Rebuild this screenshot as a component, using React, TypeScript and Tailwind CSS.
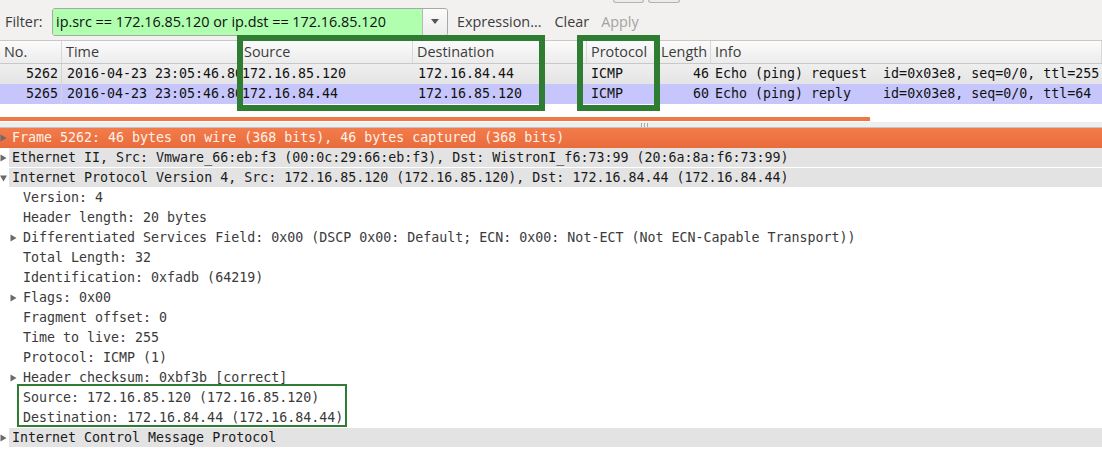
import React from 'react';

const MONO = { fontFamily: '"DejaVu Sans Mono", "Liberation Mono", monospace' };

type Packet = {
  no: string;
  time: string;
  src: string;
  dst: string;
  proto: string;
  len: string;
  info: string;
  bg: string;
};

const packets: Packet[] = [
  {
    no: '5262',
    time: '2016-04-23 23:05:46.800000',
    src: '172.16.85.120',
    dst: '172.16.84.44',
    proto: 'ICMP',
    len: '46',
    info: 'Echo (ping) request  id=0x03e8, seq=0/0, ttl=255',
    bg: 'bg-linear-to-b from-[#efefef] to-[#e4e4e4]',
  },
  {
    no: '5265',
    time: '2016-04-23 23:05:46.800000',
    src: '172.16.84.44',
    dst: '172.16.85.120',
    proto: 'ICMP',
    len: '60',
    info: 'Echo (ping) reply    id=0x03e8, seq=0/0, ttl=64',
    bg: 'bg-[#c6c6fc]',
  },
];

type Node = {
  text: string;
  level: 0 | 1;
  arrow?: 'right' | 'down';
  kind?: 'selected' | 'gray';
};

const details: Node[] = [
  { text: 'Frame 5262: 46 bytes on wire (368 bits), 46 bytes captured (368 bits)', level: 0, arrow: 'right', kind: 'selected' },
  { text: 'Ethernet II, Src: Vmware_66:eb:f3 (00:0c:29:66:eb:f3), Dst: WistronI_f6:73:99 (20:6a:8a:f6:73:99)', level: 0, arrow: 'right', kind: 'gray' },
  { text: 'Internet Protocol Version 4, Src: 172.16.85.120 (172.16.85.120), Dst: 172.16.84.44 (172.16.84.44)', level: 0, arrow: 'down', kind: 'gray' },
  { text: 'Version: 4', level: 1 },
  { text: 'Header length: 20 bytes', level: 1 },
  { text: 'Differentiated Services Field: 0x00 (DSCP 0x00: Default; ECN: 0x00: Not-ECT (Not ECN-Capable Transport))', level: 1, arrow: 'right' },
  { text: 'Total Length: 32', level: 1 },
  { text: 'Identification: 0xfadb (64219)', level: 1 },
  { text: 'Flags: 0x00', level: 1, arrow: 'right' },
  { text: 'Fragment offset: 0', level: 1 },
  { text: 'Time to live: 255', level: 1 },
  { text: 'Protocol: ICMP (1)', level: 1 },
  { text: 'Header checksum: 0xbf3b [correct]', level: 1, arrow: 'right' },
  { text: 'Source: 172.16.85.120 (172.16.85.120)', level: 1 },
  { text: 'Destination: 172.16.84.44 (172.16.84.44)', level: 1 },
  { text: 'Internet Control Message Protocol', level: 0, arrow: 'right', kind: 'gray' },
];

const Arrow = ({ dir }: { dir: 'right' | 'down' }) => (
  <svg width="7" height="8" viewBox="0 0 7 8" className="shrink-0">
    {dir === 'right' ? (
      <path d="M0.5 0.5 L6.5 4 L0.5 7.5 Z" fill="#6a6a6a" />
    ) : (
      <path d="M0 1.5 L7 1.5 L3.5 7.5 Z" fill="#6a6a6a" />
    )}
  </svg>
);

const headerCols = [
  { label: 'No.', w: 'w-[62px]' },
  { label: 'Time', w: 'w-[178px]' },
  { label: 'Source', w: 'w-[173px]' },
  { label: 'Destination', w: 'w-[174px]' },
  { label: 'Protocol', w: 'w-[70px]' },
  { label: 'Length', w: 'w-[54px]' },
  { label: 'Info', w: 'flex-1' },
];

export default function App() {
  return (
    <div
      className="relative w-[1102px] h-[457px] overflow-hidden bg-white text-[#1c1c1c]"
      style={{ fontFamily: '"Open Sans", "Noto Sans", sans-serif' }}
    >
      {/* toolbar */}
      <div className="bg-[#f2f1f0]">
        <div className="flex h-[3px] pl-[613px] gap-[4px]">
          <div className="w-[31px] h-[3px] border border-t-0 border-[#b5b3b0] rounded-b-[3px] bg-[#ecebe9]" />
          <div className="w-[32px] h-[3px] border border-t-0 border-[#b5b3b0] rounded-b-[3px] bg-[#ecebe9]" />
        </div>
        <div className="flex items-center h-[37px] pl-[5px] text-[14.4px]">
          <span className="text-[#3c3c3c] w-[47px]">Filter:</span>
          <div className="flex h-[28px] w-[396px] rounded-[3px] border border-[#a8a8a8] overflow-hidden">
            <div className="flex-1 bg-[#afffaf] flex items-center pl-[3px] text-[#101010] whitespace-nowrap">
              ip.src == 172.16.85.120 or ip.dst == 172.16.85.120
            </div>
            <div className="w-[25px] border-l border-[#b8b8b8] bg-linear-to-b from-[#fbfbfb] to-[#ececec] flex items-center justify-center">
              <svg width="8" height="5" viewBox="0 0 8 5">
                <path d="M0 0 L8 0 L4 5 Z" fill="#555" />
              </svg>
            </div>
          </div>
          <span className="ml-[9px] text-[#3c3c3c]">Expression...</span>
          <span className="ml-[13px] text-[#3c3c3c]">Clear</span>
          <span className="ml-[12px] text-[#a3a3a3]">Apply</span>
        </div>
      </div>

      {/* packet list */}
      <div className="flex h-[24px] border-t border-b border-[#c8c8c8] bg-linear-to-b from-[#fbfbfb] to-[#ececec] text-[14.4px] text-[#3c3c3c]">
        {headerCols.map((c) => (
          <div key={c.label} className={`${c.w} flex items-center pl-[4px] pb-[1px] border-r border-[#d8d8d8] whitespace-nowrap overflow-hidden`}>
            {c.label}
          </div>
        ))}
      </div>
      <div className="text-[13.3px] text-[#111]" style={MONO}>
        {packets.map((p) => (
          <div key={p.no} className={`flex h-[20px] items-center whitespace-nowrap ${p.bg}`}>
            <div className="w-[62px] text-right pr-[3px] border-r border-[#d4d4d4] h-full leading-[20px]">{p.no}</div>
            <div className="w-[178px] pl-[5px] overflow-hidden">{p.time}</div>
            <div className="w-[173px] pl-[2px] overflow-hidden">{p.src}</div>
            <div className="w-[174px] pl-[5px] overflow-hidden">{p.dst}</div>
            <div className="w-[70px] pl-[4px] overflow-hidden">{p.proto}</div>
            <div className="w-[54px] text-right pr-[2px]">{p.len}</div>
            <div className="flex-1 pl-[4px] whitespace-pre overflow-hidden">{p.info}</div>
          </div>
        ))}
      </div>
      <div className="h-[13px]" />
      <div className="h-[4px] w-[870px] bg-[#f07746]" />

      {/* splitter */}
      <div className="h-[7px] bg-[#efefef] border-t border-[#ffffff] border-b border-b-[#c4c4c4] flex justify-center pl-[186px]">
        <div className="flex gap-[2px] pt-[1px]">
          <div className="w-[1px] h-[4px] bg-[#a8a8a8]" />
          <div className="w-[1px] h-[4px] bg-[#a8a8a8]" />
          <div className="w-[1px] h-[4px] bg-[#a8a8a8]" />
        </div>
      </div>

      {/* packet details */}
      <div className="text-[13.3px]" style={MONO}>
        {details.map((d, i) => {
          const selected = d.kind === 'selected';
          const gray = d.kind === 'gray';
          return (
            <div
              key={i}
              className={`flex items-center h-[20px] whitespace-nowrap ${
                selected ? 'bg-linear-to-b from-[#f27c4c] to-[#e96b3b] text-[#fff2e8]' : ''
              } ${gray ? 'border-b border-white' : ''}`}
            >
              <div className={`${d.level === 0 ? 'w-[12px] pl-[0px]' : 'w-[23px] pl-[10px]'} shrink-0 flex items-center`}>
                {d.arrow && <Arrow dir={d.arrow} />}
              </div>
              <div
                className={`flex-1 h-full flex items-center ${gray ? 'bg-[#e3e3e3] ml-[-3px] pl-[3px] text-[#1a1a1a]' : ''} ${
                  !selected && !gray ? 'text-[#3a3a3a]' : ''
                }`}
              >
                {d.text}
              </div>
            </div>
          );
        })}
      </div>

      {/* annotations */}
      <div className="absolute left-[237px] top-[35px] w-[308px] h-[76px] border-[6px] border-[#2e7d32]" />
      <div className="absolute left-[577px] top-[35px] w-[83px] h-[76px] border-[6px] border-[#2e7d32]" />
      <div className="absolute left-[17px] top-[384px] w-[330px] h-[43px] border-[2px] border-[#2e7d32]" />
    </div>
  );
}
